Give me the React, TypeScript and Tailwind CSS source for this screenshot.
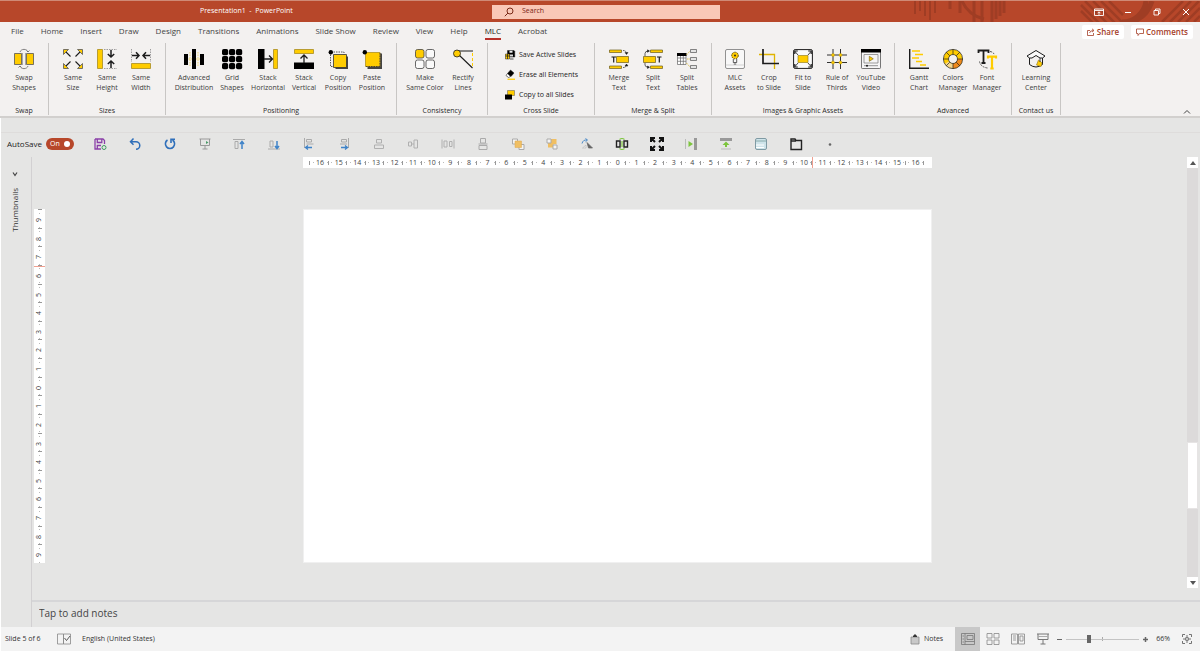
import type { ReactNode } from "react";

/**
 * Presentation editor window: title bar, ribbon, quick access bar,
 * slide canvas with rulers, notes pane and status bar
 */

interface RibbonItem {
  label: [string, string?];
  icon: ReactNode;
  width?: string;
}

interface RibbonGroupProps {
  title: string;
  items: RibbonItem[];
  padding?: string;
}

const YELLOW = "#ffcc00";
const DARK = "#1c1c1c";

const tabs = [
  "File",
  "Home",
  "Insert",
  "Draw",
  "Design",
  "Transitions",
  "Animations",
  "Slide Show",
  "Review",
  "View",
  "Help",
  "MLC",
  "Acrobat",
];

function Icon({ children, size = "size-5" }: { children: ReactNode; size?: string }) {
  return (
    <svg viewBox="0 0 20 20" className={`${size} shrink-0 overflow-visible`} fill="none" stroke={DARK} aria-hidden="true">
      {children}
    </svg>
  );
}

/* ---------- ribbon icons ---------- */

const swapIcon = (
  <Icon>
    <path d="M6 3C7-.5 13-.5 14 3M6 17c1 3.500 7 3.500 8 0" stroke="#777" strokeWidth=".9" />
    <path d="m12.500 1.500 1.500 1.500 1.500-1.500M7.500 18.500 6 17l-1.500 1.500" stroke="#666" strokeWidth=".8" />
    <path d="M.5 4.500h7v11h-7zM12.500 4.500h7v11h-7z" fill={YELLOW} stroke="#555" strokeWidth=".8" />
    <path d="M8.500 4v12M11.500 4v12" stroke="#888" strokeWidth=".7" />
  </Icon>
);

const sameSizeIcon = (
  <Icon>
    <path d="M2 2l5.500 5.500M18 2l-5.500 5.500M2 18l5.500-5.500M18 18l-5.500-5.500" strokeWidth="1.100" />
    <path
      d="M.5.500h5l-5 5zM19.500.500h-5l5 5zM.5 19.500h5l-5-5zM19.500 19.500h-5l5-5z"
      fill={YELLOW}
      stroke="#555"
      strokeWidth=".8"
    />
  </Icon>
);

const sameHeightIcon = (
  <Icon>
    <path d="M.5.500h5v19h-5z" fill={YELLOW} stroke="#a88c20" strokeWidth=".8" />
    <path d="M7 .500h13M7 19.500h13" stroke="#888" strokeWidth=".8" strokeDasharray="1.500 1" />
    <path d="M14 1v6.500M10.800 5 14 8l3.200-3M14 19v-6.500M10.800 15l3.200-3 3.200 3" strokeWidth="1.500" />
  </Icon>
);

const sameWidthIcon = (
  <Icon>
    <path d="M.5 14.500h19v5H.5z" fill={YELLOW} stroke="#a88c20" strokeWidth=".8" />
    <path d="M.5 0v13M19.500 0v13" stroke="#888" strokeWidth=".8" strokeDasharray="1.500 1" />
    <path d="M1 6.500h6.500M5 3.300 8 6.500 5 9.700M19 6.500h-6.500M15 3.300l-3 3.200 3 3.200" strokeWidth="1.500" />
  </Icon>
);

const distributionIcon = (
  <Icon>
    <path d="M2 10h16M6 3v14M14 3v14" stroke="#e8c840" strokeWidth=".7" strokeDasharray="1.500 1" />
    <path d="M0 5h4v11H0zM8 0h4v20H8zM16 5h4v11h-4z" fill="#000" stroke="none" />
  </Icon>
);

const gridIcon = (
  <Icon>
    {[0, 7, 14].map((y) =>
      [0, 7, 14].map((x) => (
        <rect key={`${x}-${y}`} x={x} y={y} width="6.200" height="6.200" rx="1.800" fill="#000" stroke="none" />
      )),
    )}
  </Icon>
);

const stackHorizontalIcon = (
  <Icon>
    <path d="M0 0h6.500v20H0z" fill="#000" stroke="none" />
    <path d="M15.500.500h4v19h-4z" fill={YELLOW} stroke="#a88c20" strokeWidth=".8" />
    <path d="M6 10h8M11 6.500l3.500 3.500-3.500 3.500" strokeWidth="1.300" />
  </Icon>
);

const stackVerticalIcon = (
  <Icon>
    <path d="M0 13.500h20V20H0z" fill="#000" stroke="none" />
    <path d="M.5.500h19v4H.5z" fill={YELLOW} stroke="#a88c20" strokeWidth=".8" />
    <path d="M10 14V6M6.500 9.500 10 6l3.500 3.500" strokeWidth="1.300" />
  </Icon>
);

const copyPositionIcon = (
  <Icon>
    <path d="M7.500 7.500H20V20H7.500z" fill="#444" stroke="none" />
    <path d="M5.500 5.500h13v13h-13z" fill={YELLOW} stroke="#333" strokeWidth=".8" />
    <path d="M2.500 3v14.500h3M3 3h13v2.500" stroke="#333" strokeWidth=".8" strokeDasharray="1.500 1" />
    <circle cx="2.800" cy="3.200" r="2.200" fill="#000" stroke="none" />
  </Icon>
);

const pastePositionIcon = (
  <Icon>
    <path d="M5.500 4.500H20V20H5.500z" fill="#444" stroke="none" />
    <path d="M3.500 3.500h14.500v14H3.500z" fill={YELLOW} stroke="#b09020" strokeWidth=".8" />
    <path d="M4 17.500h14M18 4v13" stroke="#333" strokeWidth=".8" strokeDasharray="1.500 1" />
    <circle cx="2.800" cy="3.200" r="2.200" fill="#000" stroke="none" />
  </Icon>
);

const sameColorIcon = (
  <Icon>
    <g stroke="#444" strokeWidth=".8" fill="#fafafa">
      <rect x=".5" y=".5" width="8.500" height="8.500" rx="2" fill={YELLOW} />
      <rect x="11" y=".5" width="8.500" height="8.500" rx="2" />
      <rect x=".5" y="11" width="8.500" height="8.500" rx="2" />
      <rect x="11" y="11" width="8.500" height="8.500" rx="2" />
    </g>
  </Icon>
);

const rectifyIcon = (
  <Icon>
    <path d="M4 2h16M6 6l13.500 13" strokeWidth="1.100" />
    <path d="M19.500 4v13" stroke={YELLOW} strokeDasharray="3 2" />
    <circle cx="4" cy="4.500" r="3.500" fill={YELLOW} strokeWidth=".8" />
  </Icon>
);

const mergeTextIcon = (
  <Icon>
    <g fill={YELLOW} stroke="#6b5c1c" strokeWidth=".7">
      <path d="M.5 1h12v2.500H.5zM.5 17h12v2.500H.5zM7.500 7.500h12v6h-12z" />
    </g>
    <path d="M2.500 8h4.500M4.700 8v5.500" strokeWidth="1.200" />
    <path d="M14 1.500q3.500 0 3.500 3.500M14 18.500q3.500 0 3.500-3" strokeWidth=".7" strokeDasharray="1.500 .8" />
    <path d="m16 3.500 1.500 2 1.500-2zM16 17l1.500-2 1.500 2z" fill={DARK} strokeWidth=".5" />
  </Icon>
);

const splitTextIcon = (
  <Icon>
    <g fill={YELLOW} stroke="#6b5c1c" strokeWidth=".7">
      <path d="M7.500 1h12v2.500h-12zM7.500 17h12v2.500h-12zM.5 7.500h12v6H.5z" />
    </g>
    <path d="M14 8h4.500M16.300 8v5.500" strokeWidth="1.200" />
    <path d="M2 7V4.500Q2 2 5.500 2M2 14v2q0 2.200 3.500 2.200" strokeWidth=".7" />
    <path d="m4.500.800 2 1.200-2 1.300zM4.500 17l2 1.200-2 1.300z" fill={DARK} strokeWidth=".5" />
  </Icon>
);

const splitTablesIcon = (
  <Icon>
    <path d="M.5 4.500h8.500v11H.5zM.5 9H9M.5 12.300H9M3.500 7v8.500M6.300 7v8.500" fill="#fff" stroke="#666" strokeWidth=".7" />
    <path d="M0 4h9.500v3H0z" fill="#000" stroke="none" />
    <path d="M9.500 6 13 2M10 10h3M9.500 14l3.500 4" stroke="#d8b830" strokeWidth=".8" strokeDasharray="1.500 .8" />
    <path d="M13.500.500h6v3h-6zM13.500 8.500h6v3h-6zM13.500 16.500h6v3h-6z" fill="#e4e4e4" stroke="#555" strokeWidth=".7" />
  </Icon>
);

const assetsIcon = (
  <Icon>
    <rect x=".5" y=".5" width="19" height="19" rx="1.500" stroke="#777" strokeWidth=".8" fill="#f8f8f8" />
    <path d="M.5 16h19" stroke="#bbb" strokeWidth=".6" />
    <circle cx="10" cy="6.500" r="3.300" fill={YELLOW} stroke="#5c4a10" strokeDasharray="1.600 .8" />
    <circle cx="10" cy="6.500" r=".9" fill={DARK} stroke="none" />
    <path d="M8.300 10v3.500h3.400V10M8.800 15h2.400" strokeWidth=".7" />
  </Icon>
);

const cropIcon = (
  <Icon>
    <path d="M0 5.500h15.500V20" stroke="#e0b400" strokeWidth="1.300" />
    <path d="M4 0v14.500h16" strokeWidth="1.700" />
  </Icon>
);

const fitIcon = (
  <Icon>
    <rect x=".6" y=".6" width="18.800" height="18.800" rx="1.500" strokeWidth="1" fill="#fafafa" />
    <path d="M5 6.500h10v7H5z" fill={YELLOW} stroke="#8a7418" strokeWidth=".6" />
    <path d="M5 6 2 2.500M15 6l3-3.500M5 14l-3 3.500M15 14l3 3.500" strokeWidth=".8" />
    <path d="M1.800 5V2h3M18.200 5V2h-3M1.800 15v3h3M18.200 15v3h-3" strokeWidth="1.200" />
  </Icon>
);

const thirdsIcon = (
  <Icon>
    <path d="M6 0v20M13.500 0v20M0 6h20M0 13.500h20" strokeWidth=".9" />
    <g fill={YELLOW} stroke="#b89810" strokeWidth=".5">
      <circle cx="6" cy="6" r="1.500" />
      <circle cx="13.500" cy="6" r="1.500" />
      <circle cx="6" cy="13.500" r="1.500" />
      <circle cx="13.500" cy="13.500" r="1.500" />
    </g>
  </Icon>
);

const videoIcon = (
  <Icon>
    <rect x=".5" y=".5" width="19" height="19" rx=".8" stroke="#555" strokeWidth=".8" fill="#f6f6f6" />
    <path d="M0 0h20v3.500H0z" fill="#000" stroke="none" />
    <path d="M3 5.500h14v8.500H3z" stroke="#777" strokeWidth=".7" />
    <path d="m8.300 7.300 4 2.500-4 2.500z" fill={YELLOW} stroke="#6b5c1c" strokeWidth=".6" />
    <path d="M3 16.700h14" stroke="#777" strokeWidth=".8" />
    <circle cx="6" cy="16.700" r="1" fill={DARK} stroke="none" />
  </Icon>
);

const ganttIcon = (
  <Icon>
    <path d="M3 2h8M6 5.500h8M3 9h7M7 12.500h6M11 16h6" stroke={YELLOW} strokeWidth="1.700" />
    <path d="M.7 0v19.300H20" strokeWidth="1.400" />
  </Icon>
);

const colorsIcon = (
  <Icon>
    <circle cx="10" cy="10" r="7" stroke={YELLOW} strokeWidth="5" />
    <path d="M16.900 10A7 7 0 0 1 10 17" stroke="#f08a1c" strokeWidth="5" />
    <path d="M10 17a7 7 0 0 1-6-3.500" stroke="#f6d88c" strokeWidth="5" />
    <circle cx="10" cy="10" r="9.600" strokeWidth=".7" />
    <circle cx="10" cy="10" r="4.500" strokeWidth=".7" />
    <path
      d="M10 .4v5M10 14.600v5M.4 10h5M14.600 10h5M3.200 3.200l3.600 3.600M16.800 3.200l-3.600 3.600M3.200 16.800l3.600-3.600M16.800 16.800l-3.600-3.600"
      strokeWidth=".7"
    />
  </Icon>
);

const fontIcon = (
  <Icon>
    <path d="M1.500 4V1.500h10V4M6.500 1.500V14M4.500 14h4" strokeWidth="1.800" />
    <path d="M11 9.500V7.700h8v1.800M15 7.700v12M13.300 19.500h3.400" stroke={YELLOW} strokeWidth="2.200" />
    <path d="M2.500 12.500q1 5.500 8 6.500M13 2.500q3.500.500 4.500 3.500" stroke="#444" strokeWidth=".9" strokeDasharray="2 1" />
  </Icon>
);

const learningIcon = (
  <Icon>
    <path d="M10 1.500 19 7l-2.500 2H14l-4-2.500L6 9H3.500L1 7z" strokeWidth="1" fill="#fafafa" />
    <path d="M3.500 9v6.500q6.500 5 13 0V9" strokeWidth="1" />
    <path d="m10.500 16 2-5 3.500 3-1 3.500z" fill={YELLOW} stroke="#8a7418" strokeWidth=".6" />
    <path d="M14 9v4" strokeWidth=".8" />
  </Icon>
);

const saveSlidesIcon = (
  <Icon size="size-2.5">
    <path d="M5 1h13l1.500 1.500V14H5z" fill="#000" />
    <path d="M9 1.500h6v4H9z" fill="#eee" stroke="none" />
    <path d="M9 9h7v4H9z" fill="#ddd" stroke="none" />
    <path d="M1 8h8v10H1z" fill={YELLOW} />
    <path d="M1 12h8M5 8v10M10 18h7" strokeWidth="1.500" />
  </Icon>
);

const eraseIcon = (
  <Icon size="size-2.5">
    <path d="m11 0 7 6-6 7-7-6z" fill="#000" />
    <path d="m5 7-3 4 5 4 4-2z" fill="#fff" strokeWidth="1.200" />
    <path d="M5 18.500h15" stroke={YELLOW} strokeWidth="2.500" />
  </Icon>
);

const copySlidesIcon = (
  <Icon size="size-2.5">
    <path d="M5 1h14v10H5z" fill={YELLOW} stroke="#555" />
    <path d="M0 9h14v10H0z" fill="#000" stroke="none" />
  </Icon>
);

/* ---------- ribbon data ---------- */

const leftGroups: RibbonGroupProps[] = [
  { title: "Swap", items: [{ label: ["Swap", "Shapes"], icon: swapIcon }] },
  {
    title: "Sizes",
    items: [
      { label: ["Same", "Size"], icon: sameSizeIcon },
      { label: ["Same", "Height"], icon: sameHeightIcon },
      { label: ["Same", "Width"], icon: sameWidthIcon },
    ],
  },
  {
    title: "Positioning",
    items: [
      { label: ["Advanced", "Distribution"], icon: distributionIcon, width: "w-[42px]" },
      { label: ["Grid", "Shapes"], icon: gridIcon },
      { label: ["Stack", "Horizontal"], icon: stackHorizontalIcon, width: "w-[38px]" },
      { label: ["Stack", "Vertical"], icon: stackVerticalIcon },
      { label: ["Copy", "Position"], icon: copyPositionIcon },
      { label: ["Paste", "Position"], icon: pastePositionIcon },
    ],
  },
  {
    title: "Consistency",
    items: [
      { label: ["Make", "Same Color"], icon: sameColorIcon, width: "w-[42px]" },
      { label: ["Rectify", "Lines"], icon: rectifyIcon },
    ],
  },
];

const rightGroups: RibbonGroupProps[] = [
  {
    title: "Merge & Split",
    items: [
      { label: ["Merge", "Text"], icon: mergeTextIcon },
      { label: ["Split", "Text"], icon: splitTextIcon },
      { label: ["Split", "Tables"], icon: splitTablesIcon },
    ],
  },
  {
    title: "Images & Graphic Assets",
    padding: "px-1.5",
    items: [
      { label: ["MLC", "Assets"], icon: assetsIcon },
      { label: ["Crop", "to Slide"], icon: cropIcon },
      { label: ["Fit to", "Slide"], icon: fitIcon },
      { label: ["Rule of", "Thirds"], icon: thirdsIcon },
      { label: ["YouTube", "Video"], icon: videoIcon },
    ],
  },
  {
    title: "Advanced",
    items: [
      { label: ["Gantt", "Chart"], icon: ganttIcon },
      { label: ["Colors", "Manager"], icon: colorsIcon },
      { label: ["Font", "Manager"], icon: fontIcon },
    ],
  },
  { title: "Contact us", items: [{ label: ["Learning", "Center"], icon: learningIcon }] },
];

const crossSlideActions = [
  { label: "Save Active Slides", icon: saveSlidesIcon },
  { label: "Erase all Elements", icon: eraseIcon },
  { label: "Copy to all Slides", icon: copySlidesIcon },
];

/* ---------- quick access icons, drawn on a 14px grid ---------- */

const quickActions: { name: string; art: ReactNode }[] = [
  {
    name: "Save",
    art: (
      <g stroke="#8a3fa8" strokeWidth="1.300">
        <path d="M2 2h8l1.500 1.500V7M2 2v10h6M4.300 2v3.500h4.500V2M4.300 12V8.500H8" />
        <circle cx="11" cy="10.500" r="2" stroke="#3f9a62" strokeWidth="1" />
      </g>
    ),
  },
  {
    name: "Undo",
    art: <path d="M5.500 1.500 2.500 4.700l3 3M3 4.700h5a3.800 3.800 0 0 1 0 7.600" stroke="#2f6fba" strokeWidth="1.500" />,
  },
  {
    name: "Redo",
    art: <path d="M9.500 3A4.600 4.600 0 1 1 4.500 3M8 6V2.300h4" stroke="#2f6fba" strokeWidth="1.600" />,
  },
  {
    name: "Start slide show",
    art: (
      <g stroke="#999">
        <path d="M1.500 2h11M2.500 2v6.500h9V2M7 8.500V12M4.500 12h5" />
        <path d="m8 4 2.500 1.500L8 7z" fill="#4a9a68" stroke="none" />
      </g>
    ),
  },
  {
    name: "Align top",
    art: (
      <>
        <path d="M1 2.500h12M3 4.500h3v7H3z" stroke="#aaa" />
        <path d="M10 12V5M8 7l2-2.500L12 7" stroke="#3f83c8" strokeWidth="1.500" />
      </>
    ),
  },
  {
    name: "Align bottom",
    art: (
      <>
        <path d="M1 12h12M3 4h3v6H3z" stroke="#aaa" />
        <path d="M10 4v7M8 9l2 2.500L12 9" stroke="#3f83c8" strokeWidth="1.500" />
      </>
    ),
  },
  {
    name: "Align left",
    art: (
      <>
        <path d="M2.500 1v10M4.500 2.500h5v2.500h-5zM4.500 7h7" stroke="#aaa" />
        <path d="M10 10.500H4M6 8.500l-2.500 2 2.500 2" stroke="#3f83c8" strokeWidth="1.300" />
      </>
    ),
  },
  {
    name: "Align right",
    art: (
      <>
        <path d="M11.500 1v10M4.500 2.500h5v2.500h-5zM3 7h7" stroke="#aaa" />
        <path d="M4 10.500h6M8 8.500l2.500 2-2.500 2" stroke="#3f83c8" strokeWidth="1.300" />
      </>
    ),
  },
  { name: "Align center", art: <path d="M4.500 2.500h5v3.500h-5zM2.500 8h9v3.500h-9z" stroke="#b0b0b0" /> },
  { name: "Align middle", art: <path d="M2.500 5h3v4h-3zM8 3h3.500v8H8zM5.500 7H8" stroke="#b0b0b0" /> },
  { name: "Distribute horizontally", art: <path d="M1 2.500v9M13 2.500v9M3 4h3v6H3zM8.500 4.500h2.500v5H8.500z" stroke="#b0b0b0" /> },
  { name: "Distribute vertically", art: <path d="M4.500 1.500h5V6h-5zM2.500 7h9M3 8.500h8v4H3z" stroke="#aaa" /> },
  {
    name: "Bring forward",
    art: (
      <>
        <path d="M1.500 2h5v5h-5zM8 7.500h5v5H8z" fill="#f4f4f4" stroke="#aaa" />
        <path d="M4 4h6.500v6.500H4z" fill="#f0bf63" stroke="#dca850" strokeWidth=".5" />
      </>
    ),
  },
  {
    name: "Send backward",
    art: (
      <>
        <path d="M6 2h5.500v5H6zM3 6h5.500v4.500H3z" fill="#f0bf63" stroke="none" />
        <path d="M2 2h4v4H2zM8 8h4v4H8z" fill="#f4f4f4" stroke="#aaa" />
      </>
    ),
  },
  {
    name: "Rotate",
    art: (
      <>
        <path d="M2 6.500Q3 2.500 7 3M5.500 1.500 7.500 3l-2 1.800" stroke="#4a8ac8" />
        <path d="M7 5.500 12.500 11H8.500z" fill="#666" stroke="#666" strokeWidth=".7" />
        <path d="M2.500 11 6 8v3z" fill="#eee" stroke="#bbb" strokeWidth=".7" />
      </>
    ),
  },
  {
    name: "Swap shapes",
    art: (
      <>
        <path d="M4.500 2.500Q7 .500 9.500 2.500M4.500 11.500Q7 13.500 9.500 11.500M7 4v6" stroke="#7cc53c" strokeWidth="1.200" />
        <path d="M1.500 4h3.500v6H1.500zM9 4h3.500v6H9z" stroke="#222" strokeWidth="1.400" />
      </>
    ),
  },
  {
    name: "Same size",
    art: (
      <path
        d="M1 5V1h4M9 1h4v4M13 9v4H9M5 13H1V9M1.500 1.500l3.500 3.500M12.500 1.500 9 5M12.500 12.500 9 9M1.500 12.500 5 9"
        stroke="#111"
        strokeWidth="2"
      />
    ),
  },
  {
    name: "Stack horizontal",
    art: (
      <>
        <path d="M1.500 2v10" stroke="#bbb" />
        <path d="M10 1h3v12h-3z" fill="#999" stroke="none" />
        <path d="M4.500 4 9 7l-4.500 3z" fill="#7cc53c" stroke="none" />
      </>
    ),
  },
  {
    name: "Stack vertical",
    art: (
      <>
        <path d="M1 1h12v3H1z" fill="#999" stroke="none" />
        <path d="M7 4.500 10.500 8H8v2H6V8H3.500z" fill="#7cc53c" stroke="none" />
        <path d="M2 12h10" stroke="#bbb" />
      </>
    ),
  },
  {
    name: "Selection pane",
    art: (
      <>
        <rect x="1.500" y="1.500" width="11" height="11" rx="1.500" fill="#cfe4ea" stroke="#7f9aa3" />
        <path d="M2 4h10" stroke="#8aa" />
        <path d="M2 8h8M2 10.500h8" stroke="#fff" />
      </>
    ),
  },
  { name: "New layout", art: <path d="M2 12.500V2h4l1 1.500h5.500v9zM2 4h5" stroke="#222" strokeWidth="1.400" /> },
  { name: "Customize", art: <circle cx="7" cy="7.500" r="1.300" fill="#666" stroke="none" /> },
];

/* ---------- components ---------- */

function RibbonGroup({ title, items, padding = "px-[7px]" }: RibbonGroupProps) {
  return (
    <section className={`flex flex-col border-r border-[#c8c6c4] ${padding}`} aria-label={title}>
      <div className="flex justify-center">
        {items.map(({ label, icon, width = "w-[34px]" }) => (
          <button
            key={label.join(" ")}
            type="button"
            className={`flex flex-col items-center gap-1 pt-1.5 leading-[10px] whitespace-nowrap ${width}`}
          >
            {icon}
            <span className="text-[#3c3c3c]">
              {label[0]}
              <br />
              {label[1]}
            </span>
          </button>
        ))}
      </div>
      <h2 className="mt-auto -mx-2 text-center leading-[8px] whitespace-nowrap text-[#2a2a2a]">{title}</h2>
    </section>
  );
}

function TitleBar() {
  return (
    <header className="relative flex h-[22px] items-center border-t border-[#cf8a76] bg-[#b7472a] text-white">
      <svg className="absolute right-0 top-0 h-full w-[300px]" viewBox="0 0 300 21" fill="none" stroke="#9f3d24" aria-hidden="true">
        <path d="M15 0v13M20 0v10M25 0v15M30 0v19M35 0v12" strokeWidth="2" />
        <path d="M50 0v8M60 0v12M74 0v21M82 0v21M92 0v21M96 0v18M100 0v15M104 0v12" strokeWidth="3" />
        <path d="M62 0Q68 14 84 18" strokeWidth="3" />
        <path d="M181 4l18 18M181 10l12 12M185 0l22 22M193 0l22 22M201 0l22 22M209 0l14 14" strokeWidth="2.500" />
        <path d="M222 21a24 24 0 0 0 24-21M232 21a32 32 0 0 0 20-21" strokeWidth="5" />
        <path d="M262 21 283 0M270 21 291 0M278 21 299 0M286 21 300 7M294 21l6-6" strokeWidth="2.500" />
      </svg>
      <div className="w-[41%] pl-[200px] whitespace-pre">Presentation1  -  PowerPoint</div>
      <label className="flex h-[14px] w-[19%] items-center gap-2 bg-[#f9c8b7] pl-3">
        <svg viewBox="0 0 10 10" className="size-[10px]" fill="none" stroke="#7a2a18" aria-hidden="true">
          <circle cx="6" cy="4" r="3" />
          <path d="M4 6 .8 9.200" />
        </svg>
        <input
          type="search"
          aria-label="Search"
          placeholder="Search"
          className="min-w-0 flex-1 bg-transparent outline-none placeholder:text-[#7a2414]"
        />
      </label>
      <div className="relative flex flex-1 justify-end">
        <button type="button" aria-label="Ribbon display options" className="flex w-[29px] justify-center">
          <svg viewBox="0 0 10 10" className="size-[10px]" fill="none" stroke="#fff">
            <path d="M.5 2h9v6.500h-9zM.5 3.500h9M5 8V5M3.500 6.300 5 4.800l1.500 1.500" strokeWidth=".9" />
          </svg>
        </button>
        <button type="button" aria-label="Minimize" className="flex w-[29px] justify-center">
          <svg viewBox="0 0 10 10" className="size-[10px]" stroke="#fff">
            <path d="M2 5.500h6" />
          </svg>
        </button>
        <button type="button" aria-label="Restore" className="flex w-[29px] justify-center">
          <svg viewBox="0 0 10 10" className="size-[10px]" fill="none" stroke="#fff">
            <path d="M2 3.500h4.500V8H2zM3.500 3.500V2H8v4.500H6.500" strokeWidth=".9" />
          </svg>
        </button>
        <button type="button" aria-label="Close" className="flex w-[29px] justify-center">
          <svg viewBox="0 0 10 10" className="size-[10px]" stroke="#fff">
            <path d="m2 2 6 6M8 2 2 8" />
          </svg>
        </button>
      </div>
    </header>
  );
}

function TabRow() {
  return (
    <nav className="flex h-5 items-center justify-between bg-[#f3f1f0] pr-[7px] pl-[11px] text-[8px]">
      <div className="flex gap-[17px] text-[#444]">
        {tabs.map((tab) => (
          <button
            key={tab}
            type="button"
            className={
              tab === "MLC" ? "border-b-2 border-[#b7302a] leading-[14px] text-[#222]" : "border-b-2 border-transparent leading-[14px]"
            }
          >
            {tab}
          </button>
        ))}
      </div>
      <div className="flex gap-[7px] font-semibold text-[#a5402a]">
        <button type="button" className="flex h-[14px] items-center gap-0.5 rounded-xs bg-white px-[5px]">
          <svg viewBox="0 0 8 8" className="size-2" fill="none" stroke="#a5402a" strokeWidth=".8" aria-hidden="true">
            <path d="M3 2.500H.5v5h6V5M2.500 5q.5-2.500 4-2.500M5 .800 7 2.500 5 4" />
          </svg>
          Share
        </button>
        <button type="button" className="flex h-[14px] items-center gap-0.5 rounded-xs bg-white px-[5px]">
          <svg viewBox="0 0 8 8" className="size-2" fill="none" stroke="#a5402a" strokeWidth=".8" aria-hidden="true">
            <path d="M.5 1h7v4.500H3.500l-1.500 2v-2H.5z" />
          </svg>
          Comments
        </button>
      </div>
    </nav>
  );
}

function Ribbon() {
  return (
    <div className="flex h-[76px] border-b-2 border-[#d2d0ce] bg-[#f3f1f0] pt-px pb-px">
      {leftGroups.map((group) => (
        <RibbonGroup key={group.title} {...group} />
      ))}
      <section className="flex w-[107px] flex-col border-r border-[#c8c6c4]" aria-label="Cross Slide">
        <div className="flex flex-col pt-0.5 pl-[17px]">
          {crossSlideActions.map(({ label, icon }) => (
            <button key={label} type="button" className="flex h-5 items-center gap-1 whitespace-nowrap text-[#222]">
              {icon}
              {label}
            </button>
          ))}
        </div>
        <h2 className="mt-auto text-center leading-[8px] text-[#2a2a2a]">Cross Slide</h2>
      </section>
      {rightGroups.map((group) => (
        <RibbonGroup key={group.title} {...group} />
      ))}
      <button type="button" aria-label="Collapse the ribbon" className="mt-auto mr-2 ml-auto">
        <svg viewBox="0 0 10 6" className="h-[6px] w-[10px]" fill="none" stroke="#444">
          <path d="M2 4.500 5 1.500l3 3" />
        </svg>
      </button>
    </div>
  );
}

function QuickAccessBar() {
  return (
    <div className="mt-[14px] flex h-[25px] items-center border-t border-[#dedcdb] pb-[3px] pl-1.5">
      <label className="flex w-[76px] items-center gap-1 text-[8px] text-[#222]">
        AutoSave
        <input type="checkbox" defaultChecked className="sr-only" />
        <span className="flex h-3 w-7 items-center justify-between rounded-full bg-[#b7472a] px-1 text-[7px] leading-3 text-white">
          On
          <span className="size-1.5 rounded-full bg-white" />
        </span>
      </label>
      <div className="flex w-[765px]">
        {quickActions.map(({ name, art }) => (
          <button key={name} type="button" aria-label={name} className="flex flex-1 justify-center">
            <svg viewBox="0 0 14 14" className="size-[14px]" fill="none">
              {art}
            </svg>
          </button>
        ))}
      </div>
    </div>
  );
}

function HorizontalRuler() {
  const marks = Array.from({ length: 33 }, (_, i) => Math.abs(i - 16));

  return (
    <div className="relative flex h-[11px] w-[629px] bg-white pr-2 pl-1.5 leading-[11px] text-[#444]">
      {marks.map((mark, i) => (
        <div key={i} className="flex flex-1 items-center justify-between">
          <span className="h-1 w-px bg-[#999]" />
          <span className="size-px bg-[#bbb]" />
          <span className="w-2 text-center">{mark}</span>
          <span className="size-px bg-[#bbb]" />
        </div>
      ))}
      <span className="h-1 w-px self-center bg-[#999]" />
      <span className="absolute inset-y-0 left-[81%] w-px bg-[#f0a090]" />
    </div>
  );
}

function VerticalRuler() {
  const marks = Array.from({ length: 19 }, (_, i) => Math.abs(i - 9));

  return (
    <div className="relative flex h-[354px] w-[11px] flex-col bg-white text-[#444]">
      {marks.map((mark, i) => (
        <div key={i} className="flex flex-1 flex-col items-center justify-between">
          <span className="h-px w-1 bg-[#999]" />
          <span className="size-px bg-[#bbb]" />
          <span className="-rotate-90 leading-[8px]">{mark}</span>
          <span className="size-px bg-[#bbb]" />
        </div>
      ))}
      <span className="absolute inset-x-0 top-[16%] h-px bg-[#f0a090]" />
    </div>
  );
}

function ScrollBar() {
  return (
    <div className="mr-[2px] mb-3 flex w-[11px] flex-col bg-[#dcdada]">
      <button type="button" aria-label="Scroll up" className="flex h-[11px] items-center justify-center bg-white">
        <svg viewBox="0 0 6 4" className="h-1 w-1.5">
          <path d="M0 4 3 0l3 4z" fill="#555" />
        </svg>
      </button>
      <div className="flex-4" />
      <div className="h-[67px] border border-[#e6e4e4] bg-white" />
      <div className="flex-1" />
      <button type="button" aria-label="Scroll down" className="flex h-[11px] items-center justify-center bg-white">
        <svg viewBox="0 0 6 4" className="h-1 w-1.5">
          <path d="M0 0l3 4 3-4z" fill="#555" />
        </svg>
      </button>
    </div>
  );
}

function Workspace() {
  return (
    <div className="flex flex-1">
      <aside className="flex w-[31px] flex-col items-center gap-[11px] border-r border-[#d2d0d2] pt-[14px] pr-0.5">
        <button type="button" aria-label="Expand thumbnails">
          <svg viewBox="0 0 6 6" className="size-1.5" fill="none" stroke="#444" strokeWidth="1.200">
            <path d="M1 1.500 3 4.500l2-3" />
          </svg>
        </button>
        <span className="rotate-180 text-[8px] text-[#333] [writing-mode:vertical-rl]">Thumbnails</span>
      </aside>
      <div className="flex flex-1 flex-col">
        <main className="flex flex-1 pl-0.5">
          <div className="pt-[52px]">
            <VerticalRuler />
          </div>
          <div className="flex flex-1 flex-col items-center gap-[41px] pl-[3px]">
            <HorizontalRuler />
            <div className="aspect-[629/354] w-[629px] border border-[#f0f0f0] bg-white" />
          </div>
          <ScrollBar />
        </main>
        <label className="flex h-[27px] items-center border-t-2 border-[#d6d6d8] pb-0.5 pl-[7px] text-[10px]">
          <input
            aria-label="Notes"
            placeholder="Tap to add notes"
            className="w-full bg-transparent outline-none placeholder:text-[#444]"
          />
        </label>
      </div>
    </div>
  );
}

function StatusBar() {
  return (
    <footer className="flex h-6 items-center bg-[#f3f3f3] pr-1 pl-1 text-[#333]">
      <span className="w-[52px]">Slide 5 of 6</span>
      <button type="button" aria-label="Spelling" className="mr-[11px]">
        <svg viewBox="0 0 14 12" className="h-3 w-[14px]" fill="none" stroke="#888" strokeWidth=".8">
          <path d="M.5 1h6v10h-6zM6.500 1h7v10h-7z" />
          <path d="m7.500 5 2 2.500L13 3" stroke="#333" />
        </svg>
      </button>
      <button type="button">English (United States)</button>
      <button type="button" className="mr-3 ml-auto flex items-center gap-1">
        <svg viewBox="0 0 10 12" className="h-3 w-[10px]">
          <path d="M1 4h8v7H1z" fill="#c8c8c8" stroke="#888" strokeWidth=".8" />
          <path d="M3 3 5 1l2 2v1H3z" fill="#333" />
        </svg>
        Notes
      </button>
      <div className="flex h-full">
        <button type="button" aria-label="Normal view" className="flex w-[25px] items-center justify-center bg-[#c8c8c8]">
          <svg viewBox="0 0 14 12" className="h-3 w-[14px]" fill="none" stroke="#777" strokeWidth=".8">
            <path d="M.5.500h13v11H.5zM4 .500v11M6 2.500h6v4H6zM4 8.500h9.500M1.500 3H3M1.500 6H3M1.500 9H3" />
          </svg>
        </button>
        <button type="button" aria-label="Slide sorter" className="flex w-[25px] items-center justify-center">
          <svg viewBox="0 0 14 12" className="h-3 w-[14px]" fill="none" stroke="#888" strokeWidth=".8">
            <path d="M1 .500h5v4.500H1zM8 .500h5v4.500H8zM1 7h5v4.500H1zM8 7h5v4.500H8z" />
          </svg>
        </button>
        <button type="button" aria-label="Reading view" className="flex w-[25px] items-center justify-center">
          <svg viewBox="0 0 14 12" className="h-3 w-[14px]" fill="none" stroke="#888" strokeWidth=".8">
            <path d="M.5 1h6v10h-6zM7.500 1h6v10h-6zM2 3h3M2 5h3M2 7h3M9 3h3v5H9z" />
          </svg>
        </button>
        <button type="button" aria-label="Slide show" className="flex w-[25px] items-center justify-center">
          <svg viewBox="0 0 14 12" className="h-3 w-[14px]" fill="none" stroke="#777">
            <path d="M1 1h12M2 1v5.500h10V1M7 6.500V11M4.500 11h5" />
            <path d="M2 3.500h10" stroke="#aaa" />
          </svg>
        </button>
      </div>
      <button type="button" aria-label="Zoom out" className="mr-1 ml-0.5">
        <svg viewBox="0 0 5 5" className="size-[5px]" stroke="#666">
          <path d="M0 2.500h5" />
        </svg>
      </button>
      <input
        type="range"
        aria-label="Zoom"
        min="10"
        max="400"
        defaultValue="128"
        className="h-2 w-[73px] appearance-none bg-[linear-gradient(#c4c4c4,#c4c4c4),linear-gradient(#aaa,#aaa)] bg-[length:100%_1px,1px_4px] bg-center bg-no-repeat [&::-webkit-slider-thumb]:h-2 [&::-webkit-slider-thumb]:w-1 [&::-webkit-slider-thumb]:appearance-none [&::-webkit-slider-thumb]:bg-[#666]"
      />
      <button type="button" aria-label="Zoom in" className="mr-2 ml-1">
        <svg viewBox="0 0 5 5" className="size-[5px]" stroke="#666">
          <path d="M0 2.500h5M2.500 0v5" strokeWidth="1.500" />
        </svg>
      </button>
      <button type="button" className="mr-3">66%</button>
      <button type="button" aria-label="Fit slide to window" className="mr-1">
        <svg viewBox="0 0 10 10" className="size-[10px]" fill="none" stroke="#666" strokeWidth=".9">
          <path d="M.5 3V.500H3M7 .500h2.500V3M9.500 7v2.500H7M3 9.500H.5V7M5 1v2.500M5 6.500V9M1 5h2.500M6.500 5H9M3.700 3.700h2.600v2.600H3.700z" />
        </svg>
      </button>
    </footer>
  );
}

export default function App() {
  return (
    <div className="flex min-h-screen flex-col border-b-2 border-white bg-[#e5e5e4] font-['Open_Sans',sans-serif] text-[7px] text-[#333]">
      <TitleBar />
      <TabRow />
      <Ribbon />
      <div className="flex flex-1 flex-col border-l border-white">
        <QuickAccessBar />
        <Workspace />
        <StatusBar />
      </div>
    </div>
  );
}
